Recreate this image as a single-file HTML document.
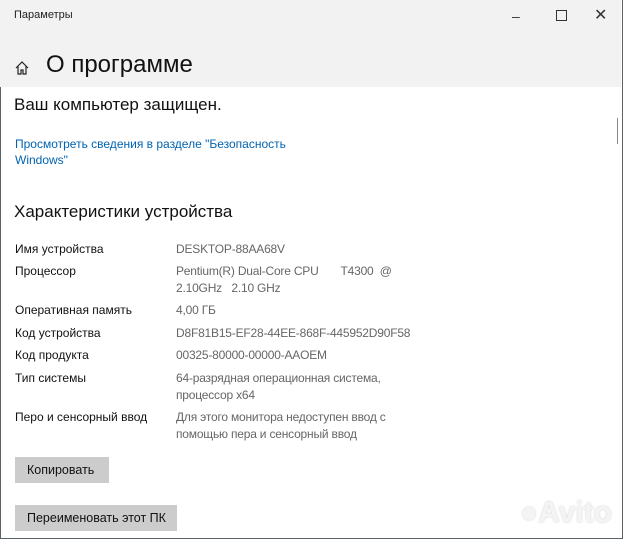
<!DOCTYPE html>
<html><head><meta charset="utf-8"><style>
body{margin:0;width:623px;height:540px;overflow:hidden;background:#fff;font-family:"Liberation Sans","Noto Sans CJK SC",sans-serif;position:relative}
.win{position:absolute;left:0;top:0;width:621px;height:538px;border:1px solid #5a6468;border-top:none}
.hdr{position:absolute;left:0;top:0;width:621px;height:87px;background:#f2f2f2}
.t{position:absolute;white-space:nowrap}
.lab{position:absolute;left:15px;font-size:12px;color:#111}
.val{position:absolute;left:176px;font-size:12px;color:#666;line-height:17px;letter-spacing:-0.2px}
.btn{position:absolute;left:15px;background:#ccc;font-size:12.5px;color:#111;line-height:26px;padding-left:12px}
</style></head><body>
<div class="win"></div>
<div class="hdr"></div>
<div class="t" style="left:14px;top:9px;font-size:11px;color:#222">Параметры</div>
<div class="t" style="left:512px;top:8px;font-size:14px;color:#333">–</div>
<div style="position:absolute;left:556px;top:10px;width:9px;height:9px;border:1px solid #333"></div>
<div class="t" style="left:594px;top:5px;font-size:16px;color:#333">✕</div>
<svg style="position:absolute;left:15px;top:61px" width="14" height="14" viewBox="0 0 14 14"><path d="M1 7 L7 1 L13 7 M3 5.5 V13 H6 V9 H8 V13 H11 V5.5" fill="none" stroke="#222" stroke-width="1.2"/></svg>
<div class="t" style="left:46px;top:51px;font-size:24px;color:#111">О программе</div>
<div class="t" style="left:14px;top:95px;font-size:17px;color:#111">Ваш компьютер защищен.</div>
<div style="position:absolute;left:617px;top:118px;width:1px;height:26px;background:#888"></div>
<div class="t" style="left:15px;top:136px;font-size:12px;color:#0063b1;line-height:16px">Просмотреть сведения в разделе "Безопасность<br>Windows"</div>
<div class="t" style="left:14px;top:202px;font-size:17px;color:#111">Характеристики устройства</div>
<div class="lab" style="top:242px">Имя устройства</div><div class="val" style="top:241px">DESKTOP-88AA68V</div>
<div class="lab" style="top:264px">Процессор</div><div class="val" style="top:263px">Pentium(R) Dual-Core CPU &nbsp;&nbsp;&nbsp;&nbsp;&nbsp;&nbsp;T4300 &nbsp;@<br>2.10GHz &nbsp;&nbsp;2.10 GHz</div>
<div class="lab" style="top:303px">Оперативная память</div><div class="val" style="top:302px">4,00 ГБ</div>
<div class="lab" style="top:326px">Код устройства</div><div class="val" style="top:325px">D8F81B15-EF28-44EE-868F-445952D90F58</div>
<div class="lab" style="top:348px">Код продукта</div><div class="val" style="top:347px">00325-80000-00000-AAOEM</div>
<div class="lab" style="top:371px">Тип системы</div><div class="val" style="top:370px">64-разрядная операционная система,<br>процессор x64</div>
<div class="lab" style="top:410px">Перо и сенсорный ввод</div><div class="val" style="top:409px">Для этого монитора недоступен ввод с<br>помощью пера и сенсорный ввод</div>
<div class="btn" style="top:457px;width:82px;height:26px">Копировать</div>
<div class="btn" style="top:505px;width:150px;height:26px">Переименовать этот ПК</div>
<div class="t" style="left:520px;top:496px;font-size:30px;color:#f4f4f4;font-weight:bold;text-shadow:0 0 2px #ccc">●Avito</div>
</body></html>
